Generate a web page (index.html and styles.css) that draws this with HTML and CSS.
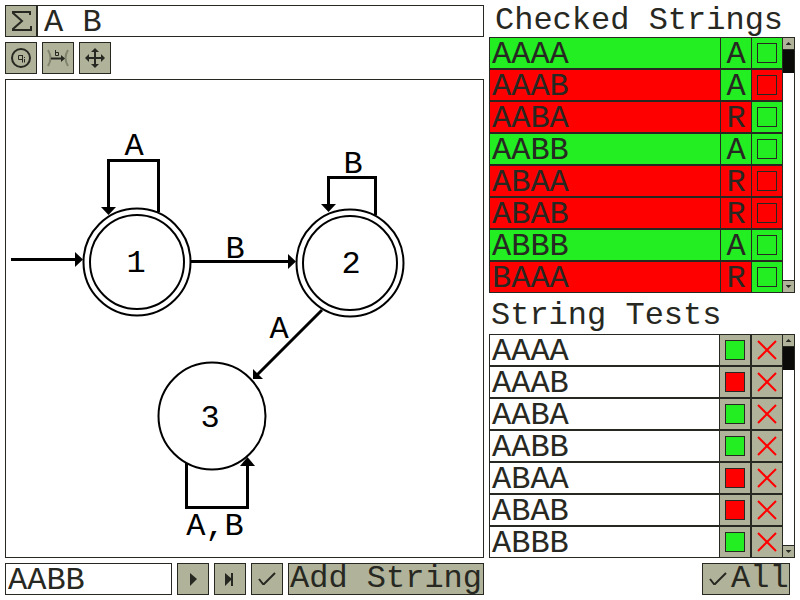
FILE: index.html
```
<!DOCTYPE html>
<html lang="en">
<head>
<meta charset="utf-8">
<title>Automaton Editor</title>
<link rel="stylesheet" href="styles.css">
</head>
<body>
<main class="app">
  <section class="editor">
    <div class="alphabet">
      <label class="sigma" for="alphabet" aria-label="Alphabet">
        <svg class="icon" viewBox="0 0 30 30"><path d="M24 9V6H7v1l9 8-9 8v1h18v-4" fill="none" stroke="currentColor" stroke-width="2"/></svg>
      </label>
      <input class="field alphabet-field" id="alphabet" type="text" value="A B">
    </div>
    <div class="toolbar">
      <button class="tool" type="button" aria-label="Add state">
        <svg class="icon" viewBox="0 0 30 30"><circle cx="15" cy="15" r="9" fill="none" stroke="currentColor" stroke-width="2"/><path d="M16.500 12.500h-4v4h4M16.500 12v7.500M18.500 14v1M18.500 16v3.500" fill="none" stroke="currentColor"/></svg>
      </button>
      <button class="tool" type="button" aria-label="Add transition">
        <svg class="icon" viewBox="0 0 30 30"><path d="M5 7q5 8 0 16M25 7q-5 8 0 16" fill="none" stroke="#80836d" stroke-width="2"/><path d="M8 15.500h12" fill="none" stroke="currentColor" stroke-width="2"/><path d="M18 12l4 3.500-4 3.500z" fill="currentColor"/><path d="M12.500 7v5.500h3v-3h-3" fill="none" stroke="currentColor"/></svg>
      </button>
      <button class="tool" type="button" aria-label="Move">
        <svg class="icon" viewBox="0 0 30 30"><path d="M15 7v17M7 15h17" fill="none" stroke="currentColor" stroke-width="2"/><path d="M15 5l4 4h-8zM15 25l4-4h-8zM5 15l4-4v8zM25 15l-4-4v8z" fill="currentColor"/></svg>
      </button>
    </div>
    <div class="canvas">
      <svg class="diagram" viewBox="6 80 477 477" role="img" aria-label="Automaton with three states">
        <g class="edge">
          <path d="M11 259.500H77"/>
          <path d="M158.500 212V160.500H108.500V208"/>
          <path d="M191 261.500H290"/>
          <path d="M375.500 215V177.500H328.500V206"/>
          <path d="M322 310L256 376"/>
          <path d="M186.500 463V507.500H247.500V464"/>
        </g>
        <g class="head">
          <path d="M75 252L83 259.500L75 267z"/>
          <path d="M101 207H116L108.500 215z"/>
          <path d="M288 254L296 261.500L288 269z"/>
          <path d="M321 204H336L328.500 212z"/>
          <path d="M253 369V379H263z"/>
          <path d="M240 466H255L247.500 457z"/>
        </g>
        <g class="state">
          <circle cx="137" cy="262" r="53.500"/>
          <circle cx="137" cy="262" r="47"/>
          <circle cx="350" cy="263" r="53.500"/>
          <circle cx="350" cy="263" r="47"/>
          <circle cx="212" cy="416" r="53.500"/>
        </g>
        <g class="mark">
          <text x="136" y="272">1</text>
          <text x="351" y="273">2</text>
          <text x="210" y="427">3</text>
          <text x="134" y="155">A</text>
          <text x="235" y="258">B</text>
          <text x="353" y="173">B</text>
          <text x="279" y="338">A</text>
          <text x="215" y="535">A,B</text>
        </g>
      </svg>
    </div>
    <div class="actions">
      <input class="field test-field" type="text" value="AABB" aria-label="Test string">
      <button class="tool" type="button" aria-label="Run">
        <svg class="icon" viewBox="0 0 30 30"><path d="M12 9l7 6-7 7z" fill="currentColor"/></svg>
      </button>
      <button class="tool" type="button" aria-label="Step">
        <svg class="icon" viewBox="0 0 30 30"><path d="M10 9l7 6-7 7zM16 9h2v13h-2z" fill="currentColor"/></svg>
      </button>
      <button class="tool" type="button" aria-label="Check">
        <svg class="icon" viewBox="0 0 30 30"><path d="M7 15l4 5h1L23 9" fill="none" stroke="currentColor" stroke-width="2"/></svg>
      </button>
      <button class="tool add" type="button">Add String</button>
    </div>
  </section>

  <section class="results">
    <h2 class="title title-checked">Checked Strings</h2>
    <div class="list">
      <table class="rows checked">
        <tbody>
          <tr><td class="name ok">AAAA</td><td class="verdict ok">A</td><td class="mini ok"><input class="box" type="checkbox" aria-label="AAAA"></td></tr>
          <tr><td class="name bad">AAAB</td><td class="verdict ok">A</td><td class="mini bad"><input class="box" type="checkbox" aria-label="AAAB"></td></tr>
          <tr><td class="name bad">AABA</td><td class="verdict bad">R</td><td class="mini ok"><input class="box" type="checkbox" aria-label="AABA"></td></tr>
          <tr><td class="name ok">AABB</td><td class="verdict ok">A</td><td class="mini ok"><input class="box" type="checkbox" aria-label="AABB"></td></tr>
          <tr><td class="name bad">ABAA</td><td class="verdict bad">R</td><td class="mini bad"><input class="box" type="checkbox" aria-label="ABAA"></td></tr>
          <tr><td class="name bad">ABAB</td><td class="verdict bad">R</td><td class="mini bad"><input class="box" type="checkbox" aria-label="ABAB"></td></tr>
          <tr><td class="name ok">ABBB</td><td class="verdict ok">A</td><td class="mini ok"><input class="box" type="checkbox" aria-label="ABBB"></td></tr>
          <tr><td class="name bad">BAAA</td><td class="verdict bad">R</td><td class="mini ok"><input class="box" type="checkbox" aria-label="BAAA"></td></tr>
        </tbody>
      </table>
      <div class="scroll">
        <button class="nudge up" type="button" aria-label="Scroll up"></button>
        <div class="track"><div class="thumb"></div></div>
        <button class="nudge down" type="button" aria-label="Scroll down"></button>
      </div>
    </div>

    <h2 class="title title-tests">String Tests</h2>
    <div class="list">
      <table class="rows tests">
        <tbody>
          <tr><td class="name">AAAA</td><td class="mini"><button class="cell" type="button" aria-label="Accept"><span class="chip ok"></span></button></td><td class="mini"><button class="cell" type="button" aria-label="Remove AAAA"><svg class="cross" viewBox="0 0 20 20"><path d="M1 1L19 19M19 1L1 19"/></svg></button></td></tr>
          <tr><td class="name">AAAB</td><td class="mini"><button class="cell" type="button" aria-label="Reject"><span class="chip bad"></span></button></td><td class="mini"><button class="cell" type="button" aria-label="Remove AAAB"><svg class="cross" viewBox="0 0 20 20"><path d="M1 1L19 19M19 1L1 19"/></svg></button></td></tr>
          <tr><td class="name">AABA</td><td class="mini"><button class="cell" type="button" aria-label="Accept"><span class="chip ok"></span></button></td><td class="mini"><button class="cell" type="button" aria-label="Remove AABA"><svg class="cross" viewBox="0 0 20 20"><path d="M1 1L19 19M19 1L1 19"/></svg></button></td></tr>
          <tr><td class="name">AABB</td><td class="mini"><button class="cell" type="button" aria-label="Accept"><span class="chip ok"></span></button></td><td class="mini"><button class="cell" type="button" aria-label="Remove AABB"><svg class="cross" viewBox="0 0 20 20"><path d="M1 1L19 19M19 1L1 19"/></svg></button></td></tr>
          <tr><td class="name">ABAA</td><td class="mini"><button class="cell" type="button" aria-label="Reject"><span class="chip bad"></span></button></td><td class="mini"><button class="cell" type="button" aria-label="Remove ABAA"><svg class="cross" viewBox="0 0 20 20"><path d="M1 1L19 19M19 1L1 19"/></svg></button></td></tr>
          <tr><td class="name">ABAB</td><td class="mini"><button class="cell" type="button" aria-label="Reject"><span class="chip bad"></span></button></td><td class="mini"><button class="cell" type="button" aria-label="Remove ABAB"><svg class="cross" viewBox="0 0 20 20"><path d="M1 1L19 19M19 1L1 19"/></svg></button></td></tr>
          <tr><td class="name">ABBB</td><td class="mini"><button class="cell" type="button" aria-label="Accept"><span class="chip ok"></span></button></td><td class="mini"><button class="cell" type="button" aria-label="Remove ABBB"><svg class="cross" viewBox="0 0 20 20"><path d="M1 1L19 19M19 1L1 19"/></svg></button></td></tr>
        </tbody>
      </table>
      <div class="scroll">
        <button class="nudge up" type="button" aria-label="Scroll up"></button>
        <div class="track"><div class="thumb"></div></div>
        <button class="nudge down" type="button" aria-label="Scroll down"></button>
      </div>
    </div>
    <div class="footer">
      <button class="tool all" type="button"><svg class="icon" viewBox="0 0 30 30"><path d="M7 15l4 5h1L23 9" fill="none" stroke="currentColor" stroke-width="2"/></svg>All</button>
    </div>
  </section>
</main>
</body>
</html>
```

FILE: styles.css
```
:root {
  --ink: #272822;
  --khaki: #b0b399;
  --green: #22ee22;
  --red: #ff0000;
}

* {
  box-sizing: border-box;
}

body {
  margin: 0;
  background: #fff;
  color: var(--ink);
}

body,
input,
button {
  font-family: "Liberation Mono", monospace;
  font-size: 32px;
  line-height: 30px;
}

.app {
  display: grid;
  grid-template-columns: minmax(0, 479fr) minmax(0, 306fr);
  gap: 5px;
  padding: 5px;
  min-height: 100vh;
}

.editor {
  display: flex;
  flex-direction: column;
  gap: 5px;
}

.alphabet,
.toolbar,
.actions,
.footer {
  display: flex;
}

.toolbar,
.actions {
  gap: 5px;
}

.sigma,
.tool {
  display: flex;
  flex: none;
  align-items: center;
  min-width: 32px;
  height: 32px;
  padding: 0;
  border: 1px solid var(--ink);
  border-radius: 0;
  background: var(--khaki);
  color: var(--ink);
}

.icon {
  display: block;
  flex: none;
  width: 30px;
  height: 30px;
}

.field {
  flex: 1;
  min-width: 0;
  height: 32px;
  margin: 0;
  border: 1px solid var(--ink);
  border-radius: 0;
  background: #fff;
  color: var(--ink);
  outline: none;
}

.alphabet-field {
  padding: 2px 6px 0;
}

.test-field {
  padding: 2px 2px 0;
}

.add {
  justify-content: center;
  width: 196px;
  white-space: nowrap;
}

.canvas {
  flex: 1 0 0;
  min-height: 0;
  border: 1px solid var(--ink);
}

.diagram {
  display: block;
  width: 100%;
  height: 100%;
}

.edge {
  fill: none;
  stroke: #000;
  stroke-width: 3px;
}

.head {
  fill: #000;
}

.state {
  fill: #fff;
  stroke: #000;
  stroke-width: 2px;
}

.mark {
  fill: #000;
  text-anchor: middle;
}

.results {
  display: flex;
  flex-direction: column;
}

.title {
  margin: 0;
  font-size: 32px;
  font-weight: 400;
  line-height: 32px;
  white-space: nowrap;
}

.title-checked {
  padding-left: 6px;
}

.title-tests {
  padding: 7px 2px 2px;
}

.list {
  display: flex;
}

.rows {
  flex: 1;
  border-collapse: separate;
  border-spacing: 0;
  table-layout: fixed;
}

.rows td {
  height: 32px;
  padding: 0;
  border: 1px solid var(--ink);
  border-right: 0;
}

.rows .name {
  padding: 4px 2px 0;
  line-height: 26px;
}

.rows .verdict {
  width: 31px;
  padding-top: 4px;
  line-height: 26px;
  text-align: center;
}

.rows .mini {
  width: 31px;
}

.tests .mini {
  width: 32px;
  background: var(--khaki);
}

.tests .mini + .mini {
  width: 31px;
}

.tests .mini:nth-child(2) {
  border-right: 1px solid var(--ink);
}

.ok {
  background: var(--green);
}

.bad {
  background: var(--red);
}

.box {
  display: block;
  width: 20px;
  height: 20px;
  margin: 0 auto;
  border: 1px solid var(--ink);
  appearance: none;
}

.cell {
  display: flex;
  align-items: center;
  justify-content: center;
  width: 100%;
  height: 30px;
  padding: 0;
  border: 0;
  background: var(--khaki);
}

.chip {
  width: 20px;
  height: 20px;
  border: 1px solid var(--ink);
}

.cross {
  width: 20px;
  height: 20px;
  fill: none;
  stroke: var(--red);
  stroke-width: 2px;
}

.scroll {
  display: flex;
  flex: none;
  flex-direction: column;
  width: 13px;
  border: 1px solid var(--ink);
}

.track {
  flex: 1;
}

.thumb {
  height: 23px;
  background: #0a0a08;
}

.nudge {
  display: grid;
  place-items: center;
  height: 12px;
  padding: 0;
  border: 0;
  background: var(--khaki);
}

.up {
  border-bottom: 1px solid var(--ink);
}

.down {
  border-top: 1px solid var(--ink);
}

.nudge::before {
  content: "";
  width: 6px;
  height: 3px;
  background: var(--ink);
}

.up::before {
  clip-path: polygon(50% 0, 100% 100%, 0 100%);
}

.down::before {
  clip-path: polygon(0 0, 100% 0, 50% 100%);
}

.footer {
  justify-content: flex-end;
  padding: 5px 5px 0 0;
}

.all {
  width: 88px;
}

.all .icon {
  margin-right: -2px;
}
```
